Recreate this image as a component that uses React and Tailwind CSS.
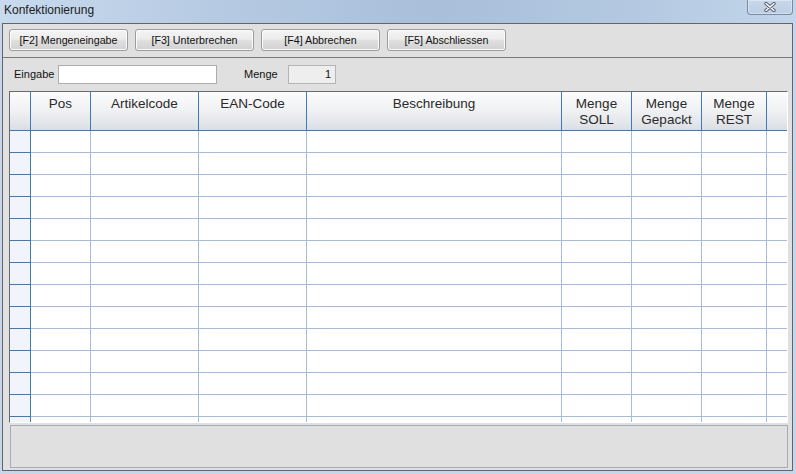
import React from "react";

const cols = [
  { w: "w-[21px]", label: [""] },
  { w: "w-[60px]", label: ["Pos"] },
  { w: "w-[108px]", label: ["Artikelcode"] },
  { w: "w-[108px]", label: ["EAN-Code"] },
  { w: "w-[255px]", label: ["Beschreibung"] },
  { w: "w-[70px]", label: ["Menge", "SOLL"] },
  { w: "w-[70px]", label: ["Menge", "Gepackt"] },
  { w: "w-[65px]", label: ["Menge", "REST"] },
  { w: "w-[20px]", label: [""] },
];

const buttons = ["[F2] Mengeneingabe", "[F3] Unterbrechen", "[F4] Abbrechen", "[F5] Abschliessen"];

function CloseGlyph() {
  return (
    <svg width="12" height="10" viewBox="0 0 12 10">
      <path d="M2 1.5 L10 8.5 M10 1.5 L2 8.5" stroke="#4d5b6e" strokeWidth="3.4" strokeLinecap="round" fill="none" />
      <path d="M2 1.5 L10 8.5 M10 1.5 L2 8.5" stroke="#ffffff" strokeWidth="1.6" strokeLinecap="round" fill="none" />
    </svg>
  );
}

export default function App() {
  const rows = Array.from({ length: 14 });
  return (
    <div className="w-[796px] h-[474px] flex flex-col overflow-hidden bg-[#c7d7e9] font-['Liberation_Sans',Arial,sans-serif]">
      {/* title bar */}
      <div className="h-[23px] shrink-0 flex justify-between items-start bg-[linear-gradient(90deg,#c8daee_0%,#b7cbe3_25%,#a9bfda_55%,#b4c9e1_80%,#c2d5ea_100%)]">
        <span className="pl-[4px] pt-[3px] text-[12px] leading-[14px] text-[#1b1b1b]">Konfektionierung</span>
        <div className="mr-[3px] w-[46px] h-[15px] flex items-center justify-center rounded-b-[4px] border border-t-0 border-[#7b8ba1] bg-[linear-gradient(#c9d8ea,#bccee4)] shadow-[inset_0_0_0_1px_rgba(255,255,255,0.35)]">
          <CloseGlyph />
        </div>
      </div>

      {/* client area */}
      <div className="flex-1 ml-[2px] mr-[3px] mb-[3px] border border-[#5f6670] bg-[#e0e0e0] flex flex-col">
        {/* toolbar */}
        <div className="h-[34px] shrink-0 border-b border-[#7a7a7a] flex items-start gap-[7px] pl-[6px] pt-[5px]">
          {buttons.map((b) => (
            <div
              key={b}
              className="w-[119px] h-[22px] flex items-center justify-center rounded-[3px] border border-[#9c9c9c] bg-[linear-gradient(#f4f4f4_0%,#ececec_45%,#dedede_55%,#d2d2d2_100%)] shadow-[inset_0_0_0_1px_#fbfbfb] text-[10.7px] text-[#111]"
            >
              {b}
            </div>
          ))}
        </div>

        {/* input row */}
        <div className="h-[33px] shrink-0 flex items-start pt-[7px] pl-[11px] text-[11px] text-[#111]">
          <span className="w-[44px] h-[19px] leading-[19px]">Eingabe</span>
          <div className="w-[159px] h-[19px] bg-white border border-[#abadb3]" />
          <span className="ml-[27px] w-[44px] h-[19px] leading-[19px]">Menge</span>
          <div className="w-[48px] h-[19px] bg-[#eeeeee] border border-[#b5b5b5] text-right pr-[4px] leading-[17px]">1</div>
        </div>

        {/* grid */}
        <div className="ml-[6px] w-[779px] h-[332px] shrink-0 border-l border-t border-[#6a6a6a] border-r-white border-b-white border-r border-b bg-white flex flex-col overflow-hidden">
          <div className="h-[39px] shrink-0 flex border-b border-[#3d78c4] bg-[linear-gradient(#fcfcfd_0%,#f1f2f4_45%,#e3e6ea_80%,#dadee4_100%)]">
            {cols.map((c, i) => (
              <div
                key={i}
                className={`${c.w} shrink-0 h-full pt-[4px] text-center text-[13.5px] leading-[16px] text-[#2a2a2a] ${i < cols.length - 1 ? "border-r border-[#3d78c4]" : ""}`}
              >
                {c.label.map((l, j) => (
                  <div key={j}>{l}</div>
                ))}
              </div>
            ))}
          </div>
          <div className="flex-1 overflow-hidden">
            {rows.map((_, r) => (
              <div key={r} className="h-[22px] flex">
                {cols.map((c, i) =>
                  i === 0 ? (
                    <div key={i} className={`${c.w} shrink-0 h-full bg-[#f1f5fb] border-r border-b border-[#3d78c4]`} />
                  ) : (
                    <div
                      key={i}
                      className={`${c.w} shrink-0 h-full border-b border-[#a3bce0] ${i < cols.length - 1 ? "border-r" : ""}`}
                    />
                  )
                )}
              </div>
            ))}
          </div>
        </div>

        {/* status panel */}
        <div className="mt-[2px] ml-[7px] w-[778px] h-[43px] shrink-0 border border-[#a6adb7] bg-[#e0e0e0]" />
      </div>
    </div>
  );
}
